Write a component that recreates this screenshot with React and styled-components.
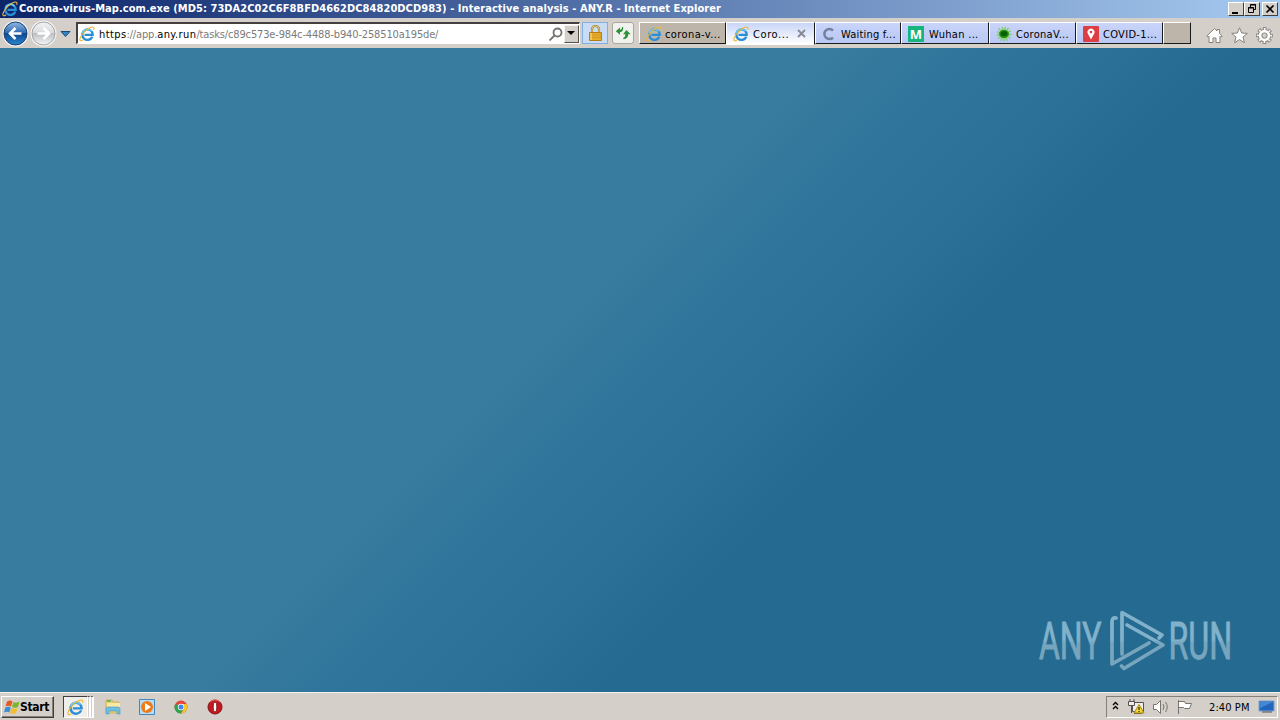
import React from "react";
import styled, { createGlobalStyle } from "styled-components";

const GlobalStyle = createGlobalStyle`
  * {
    box-sizing: border-box;
  }

  body {
    margin: 0;
    overflow: hidden;
    font-family: "DejaVu Sans Condensed", "DejaVu Sans", sans-serif;
    font-size: 11px;
    color: #000;
  }

  svg {
    flex: none;
  }
`;

const Screen = styled.div`
  width: 1280px;
  height: 720px;
  display: flex;
  flex-direction: column;
  background: #d4cfc8;
`;

const TitleBar = styled.header`
  height: 18px;
  flex: none;
  display: flex;
  align-items: center;
  padding: 0 2px;
  background: linear-gradient(90deg, #0b246a 0%, #a6caf0 100%);
`;

const Title = styled.h1`
  flex: 1;
  margin: 0 0 0 1px;
  color: #fff;
  font-size: 11px;
  line-height: 18px;
  font-weight: 700;
  letter-spacing: 0.06px;
  white-space: pre;
`;

const WindowButton = styled.button`
  width: 16px;
  height: 14px;
  padding: 0;
  margin-left: ${(props) => props.$gap || 0}px;
  display: flex;
  border: 1px solid;
  border-color: #fff #404040 #404040 #fff;
  background: #d4cfc8;
`;

const Toolbar = styled.nav`
  height: 30px;
  flex: none;
  display: flex;
  align-items: flex-start;
  padding: 4px 7px 0 2px;
  background: #d4cfc8;
`;

const NavButtons = styled.div`
  display: flex;
  align-items: center;
  width: 74px;
  height: 24px;
`;

const AddressBar = styled.div`
  width: 504px;
  height: 22px;
  display: flex;
  align-items: center;
  padding-left: 1px;
  border: 1px solid #fff;
  border-top: 2px solid #45403f;
  border-left: 2px solid #45403f;
  background: #fff;
`;

const Url = styled.div`
  flex: 1;
  margin-left: 4px;
  padding-top: 1px;
  color: #7b7b7b;
  letter-spacing: -0.15px;
  white-space: nowrap;

  b {
    color: #000;
    font-weight: 400;
    letter-spacing: 0.4px;
  }
`;

const DropButton = styled.button`
  width: 15px;
  height: 18px;
  margin-left: 1px;
  padding: 0;
  display: flex;
  align-items: center;
  justify-content: center;
  border: 1px solid;
  border-color: #f4f2ee #55504c #55504c #f4f2ee;
  background: #d4cfc8;
`;

const ToolButton = styled.button`
  width: ${(props) => props.$width}px;
  height: 22px;
  margin-left: ${(props) => props.$gap}px;
  padding: 0;
  display: flex;
  align-items: center;
  justify-content: center;
  border: 1px solid ${(props) => props.$border};
  border-radius: ${(props) => props.$radius || 0}px;
  background: ${(props) => props.$fill};
`;

const Tabs = styled.div`
  height: 23px;
  margin-left: 5px;
  display: flex;
`;

const Tab = styled.div`
  width: ${(props) => props.$width || 87}px;
  height: ${(props) => (props.$active ? 23 : 22)}px;
  display: flex;
  align-items: center;
  padding: 1px ${(props) => (props.$active ? 7 : 0)}px 0 6px;
  border: 1px solid;
  border-color: ${(props) =>
    props.$active ? "#fff #1a1a1a #fff #fff" : "#fff #1a1a1a #1a1a1a #fff"};
  background: ${(props) => props.$fill};
`;

const TabLabel = styled.span`
  flex: 1;
  margin-left: ${(props) => props.$gap}px;
  padding-top: ${(props) => props.$top ?? 1}px;
  letter-spacing: ${(props) => props.$spacing || 0}px;
  white-space: nowrap;
`;

const Commands = styled.div`
  height: 24px;
  margin-left: auto;
  padding-top: 2px;
  display: flex;
  align-items: center;
  gap: 8px;
`;

const Page = styled.main`
  flex: 1;
  display: flex;
  align-items: flex-end;
  justify-content: flex-end;
  padding: 0 36px 18px 0;
  background: linear-gradient(135deg, #387c9f 0%, #387c9f 43.5%, #30759b 50%, #2d7299 56%, #256a90 65%, #256a90 100%);
`;

const Taskbar = styled.footer`
  height: 28px;
  flex: none;
  display: flex;
  align-items: center;
  padding: 1px 2px 0 1px;
  border-top: 1px solid #f5f3f0;
  background: #d4cfc8;
`;

const StartButton = styled.button`
  width: 53px;
  height: 22px;
  padding: 0 0 0 2px;
  display: flex;
  align-items: center;
  border: 1px solid;
  border-color: #fff #404040 #404040 #fff;
  box-shadow: inset -1px -1px #85807a;
  background: #d4cfc8;
  color: #000;
  font: 700 12px "DejaVu Sans Condensed", sans-serif;
  letter-spacing: -0.3px;
`;

const RunningTask = styled.div`
  width: 25px;
  height: 22px;
  margin-left: 9px;
  display: flex;
  align-items: center;
  justify-content: center;
  border: 1px solid;
  border-color: #404040 #fff #fff #404040;
  background: #f0eeeb;
`;

const StackEdge = styled.div`
  width: 3px;
  height: 22px;
  border: solid #fff;
  border-width: 0 2px 1px 0;
  border-top: 1px solid #55504c;
`;

const QuickLaunch = styled.div`
  margin-left: 9px;
  display: flex;
  gap: 14px;
`;

const Tray = styled.div`
  width: 172px;
  height: 22px;
  margin-left: auto;
  display: flex;
  align-items: center;
  padding-left: 3px;
  border: 1px solid;
  border-color: #85807a #fff #fff #85807a;
`;

const Clock = styled.span`
  width: 49px;
  margin-left: 16px;
  letter-spacing: 0.1px;
  white-space: nowrap;
`;

function IeIcon({ size = 16 }) {
  return (
    <svg width={size} height={size} viewBox="0 0 16 16" fill="none">
      <path d="M13.300 10.700A5.200 5.200 0 1 1 13.700 8.800H5.500" stroke="#2a8ed6" strokeWidth="2.300" />
      <path d="M3.400 6.700a5.400 5.400 0 0 1 9.200-1.400" stroke="#6cc8f3" strokeWidth="1.400" />
      <path
        d="M4 14C1.500 15.600.2 14.800 1.200 12 3 7 9 1.600 13 1c1.900-.2 2.300 1 1.700 2.800"
        stroke="#edb936"
        strokeWidth="1.100"
      />
    </svg>
  );
}

function ArrowButton({ forward }) {
  return (
    <svg width="28" height="28" viewBox="0 0 28 28">
      <defs>
        <linearGradient id="blue" x2="0" y2="1">
          <stop stopColor="#92b9e3" />
          <stop offset=".48" stopColor="#2d68b2" />
          <stop offset=".5" stopColor="#10488f" />
          <stop offset="1" stopColor="#2787d1" />
        </linearGradient>
        <linearGradient id="silver" x2="0" y2="1">
          <stop stopColor="#f4f4f4" />
          <stop offset=".48" stopColor="#d8dadc" />
          <stop offset=".5" stopColor="#bbbec1" />
          <stop offset="1" stopColor="#f7f7f7" />
        </linearGradient>
      </defs>
      <circle cx="13.500" cy="13.500" r="13" fill="#f5f5f4" />
      <circle
        cx="13.500"
        cy="13.500"
        r="11.500"
        fill={forward ? "url(#silver)" : "url(#blue)"}
        stroke={forward ? "#a1a3a6" : "#183d71"}
      />
      <path
        d="M19.500 13.500H9M13.500 8 8 13.500l5.500 5.500"
        transform={forward ? "rotate(180 13.500 13.500)" : undefined}
        fill="none"
        stroke="#fff"
        strokeWidth="2.600"
      />
    </svg>
  );
}

function LockIcon() {
  return (
    <svg width="15" height="17" viewBox="0 0 15 17">
      <path d="M4 8V4.500a3.500 3.500 0 0 1 7 0V8" fill="none" stroke="#a7822d" strokeWidth="2.200" />
      <path d="M4 8V4.500a3.500 3.500 0 0 1 7 0V8" fill="none" stroke="#f0dc98" strokeWidth=".8" />
      <path d="M1.500 7.500h12v8h-12z" fill="#e9ad25" stroke="#b67c15" />
      <path d="M2 10h11M2 12.500h11" stroke="#d0982a" />
      <path d="M3 8v7" stroke="#ffe28a" />
    </svg>
  );
}

function RefreshIcon() {
  return (
    <svg width="16" height="16" viewBox="0 0 16 16" fill="#2c9138">
      <path d="M.8 6.200 5 2.400V4.800Q7 4.800 7 2h1.200q.3 5-3.200 5.300V9.800z" />
      <path d="M11.500 5 15.600 9.300H13.200q.1 4.700-4.800 5V12.600q2.100-.4 2-3.300H8z" />
    </svg>
  );
}

function VirusIcon() {
  return (
    <svg width="16" height="16" viewBox="0 0 16 16">
      <circle cx="8" cy="8" r="5.500" fill="#9fda87" />
      <circle cx="8" cy="8" r="6" fill="none" stroke="#83cb72" strokeWidth="3" strokeDasharray="1.200 1.600" />
      <ellipse cx="8" cy="8" rx="5" ry="4.200" fill="#2a961c" />
      <ellipse cx="8" cy="7.800" rx="3.500" ry="2.700" fill="#086204" />
    </svg>
  );
}

function PinIcon() {
  return (
    <svg width="16" height="16" viewBox="0 0 16 16">
      <rect width="16" height="16" rx="1" fill="#dc3e43" />
      <path d="M8 13.500 5 8a3.500 3.500 0 1 1 6 0z" fill="#fff" />
      <circle cx="8" cy="6" r="1.300" fill="#dc3e43" />
    </svg>
  );
}

const MediumBadge = styled.span`
  width: 16px;
  height: 16px;
  display: flex;
  align-items: center;
  justify-content: center;
  background: #17b57b;
  color: #fff;
  font: 700 13px "Open Sans", sans-serif;
`;

function HomeIcon() {
  return (
    <svg width="17" height="17" viewBox="0 0 17 17">
      <path
        d="M.8 9 8.500 1.500l2.500 2.500V2.500h2.500V6.500L16.200 9 15 10.200l-1-1v6.300h-4v-4.500H7v4.500H3V9.200l-1 1z"
        fill="#fff"
        stroke="#85827d"
      />
    </svg>
  );
}

function StarIcon() {
  return (
    <svg width="17" height="17" viewBox="0 0 17 17">
      <path
        d="m8.500.8 2.200 5.200 5.600.4-4.300 3.600 1.400 5.700-4.900-3.100-4.900 3.100L5 10 .7 6.400l5.600-.4z"
        fill="#fff"
        stroke="#85827d"
      />
    </svg>
  );
}

function GearIcon() {
  return (
    <svg width="17" height="17" viewBox="0 0 17 17" fill="none">
      <circle cx="8.500" cy="8.500" r="6.600" stroke="#85827d" strokeWidth="3.600" strokeDasharray="3.400 1.784" strokeDashoffset="1.700" />
      <circle cx="8.500" cy="8.500" r="4.400" stroke="#85827d" strokeWidth="4.400" />
      <circle cx="8.500" cy="8.500" r="6.600" stroke="#fff" strokeWidth="2" strokeDasharray="1.700 3.484" strokeDashoffset=".85" />
      <circle cx="8.500" cy="8.500" r="4.400" stroke="#fff" strokeWidth="2.600" />
    </svg>
  );
}

function WindowsIcon() {
  return (
    <svg width="16" height="16" viewBox="0 0 16 16">
      <path d="M3 2.500Q6 .500 8.500 2.500L7 7.500Q4.500 6 1.500 7.500z" fill="#e85a25" />
      <path d="M9.500 3q3 1.500 6-.5L14 8q-3 1.500-6 0z" fill="#79b62e" />
      <path d="M1.300 8.500q3-1.500 5.500 0L5.300 13.500q-3-1.500-5.300 0z" fill="#398ed5" />
      <path d="M7.500 9q3 1.500 6 0L12 14q-3 1.500-6 0z" fill="#f4bd2d" />
    </svg>
  );
}

function FolderIcon() {
  return (
    <svg width="20" height="20" viewBox="0 0 20 20">
      <path d="M3 3h6l1 2h6v11H3z" fill="#ecd16d" stroke="#c7a94d" strokeWidth=".7" />
      <path d="M4 6h13v7H4z" fill="#f8eaa6" />
      <path d="M4 4h4" stroke="#56ad5b" strokeWidth="1.500" />
      <path d="M3 17v-5q0-2 2-2h10q2 0 2 2v5h-3v-3H6v3z" fill="#6fbfe2" stroke="#4b99bd" strokeWidth=".6" />
    </svg>
  );
}

function MediaIcon() {
  return (
    <svg width="20" height="20" viewBox="0 0 20 20">
      <path d="M2.500 2.500h15v15h-15z" fill="#b7dcf5" stroke="#4387bd" />
      <circle cx="10" cy="10" r="6" fill="#ee7b16" />
      <path d="m8 6 6 4-6 4z" fill="#fff" />
    </svg>
  );
}

function ChromeIcon() {
  return (
    <svg width="20" height="20" viewBox="0 0 20 20">
      <circle cx="10" cy="10" r="6.500" fill="#e5453a" />
      <path d="M4.400 6.700A6.500 6.500 0 0 0 10 16.500l3-5-3-1.500z" fill="#30a350" />
      <path d="M15.600 7A6.500 6.500 0 0 1 10 16.500l3-5L10 7z" fill="#f6c52b" />
      <circle cx="10" cy="10" r="3.200" fill="#fff" />
      <circle cx="10" cy="10" r="2.500" fill="#4285e8" />
    </svg>
  );
}

function OperaIcon() {
  return (
    <svg width="20" height="20" viewBox="0 0 20 20">
      <circle cx="10" cy="10" r="7" fill="#c31820" stroke="#861016" />
      <path d="M5 5q5-4 10 0" stroke="#f06a68" fill="none" />
      <ellipse cx="10" cy="10" rx="1.800" ry="5" fill="#fff" stroke="#7d1010" strokeWidth=".8" />
    </svg>
  );
}

function Watermark() {
  return (
    <svg width="210" height="68" viewBox="0 0 210 68" opacity=".92">
      <defs>
        <linearGradient id="mark" gradientUnits="userSpaceOnUse" x1="0" y1="0" x2="0" y2="68">
          <stop offset=".5" stopColor="#8ab9d0" />
          <stop offset=".54" stopColor="#7eabc2" />
        </linearGradient>
      </defs>
      <g
        fill="url(#mark)"
        stroke="url(#mark)"
        strokeWidth=".9"
        fontFamily="Roboto, sans-serif"
        fontSize="51.500"
      >
        <text transform="translate(5 0) scale(.62 1)" y="53">ANY</text>
        <text transform="translate(134.500 0) scale(.625 1)" y="53">RUN</text>
      </g>
      <g fill="none" stroke="url(#mark)" strokeWidth="3.700" strokeLinejoin="round" strokeLinecap="round">
        <path d="M82 12q-4-1-4 4v42l37-21" />
        <path d="M88 48V6.500l40 22.500-3 3" />
        <path d="M93 19l36 20L90 62.500 87.500 60" />
      </g>
    </svg>
  );
}

const blueTab = "linear-gradient(#c9d4f8, #b8c8f5)";

function App() {
  return (
    <Screen>
      <GlobalStyle />
      <TitleBar>
        <IeIcon />
        <Title>
          Corona-virus-Map.com.exe (MD5: 73DA2C02C6F8BFD4662DC84820DCD983) - Interactive analysis - ANY.R - Internet Explorer
        </Title>
        <WindowButton aria-label="Minimize">
          <svg width="14" height="12"><path d="M3 9h6v2H3z" /></svg>
        </WindowButton>
        <WindowButton aria-label="Restore">
          <svg width="14" height="12" fill="none" stroke="#000">
            <path d="M5.500 4V1.500h5v5H9M5 2h6M3.500 4.500h5v5h-5zM3 5h6" />
          </svg>
        </WindowButton>
        <WindowButton $gap={2} aria-label="Close">
          <svg width="14" height="12" stroke="#000" strokeWidth="1.700"><path d="m3.500 2.500 7 7m0-7-7 7" /></svg>
        </WindowButton>
      </TitleBar>

      <Toolbar>
        <NavButtons>
          <ArrowButton />
          <ArrowButton forward />
          <svg width="18" height="12"><path d="M3 3.500h9L7.500 8.500z" fill="#3585c4" stroke="#174c79" /></svg>
        </NavButtons>
        <AddressBar>
          <IeIcon />
          <Url>
            <b>https</b>://app.<b>any.run</b>/tasks/c89c573e-984c-4488-b940-258510a195de/
          </Url>
          <svg width="14" height="14" fill="none" stroke="#77736f" strokeWidth="1.800">
            <circle cx="8.500" cy="5.500" r="4" /><path d="m5.500 8.500-5 5" />
          </svg>
          <DropButton aria-label="Show address list">
            <svg width="9" height="5"><path d="M0 0h8L4 4z" /></svg>
          </DropButton>
        </AddressBar>
        <ToolButton $width={26} $gap={2} $border="#83afe2" $fill="#c8dcf6"><LockIcon /></ToolButton>
        <ToolButton $width={22} $gap={4} $border="#aaa6a0" $fill="#f1f1ed" $radius={3}><RefreshIcon /></ToolButton>
        <Tabs>
          <Tab $width={87} $fill="#bdb5aa"><IeIcon /><TabLabel $gap={3} $spacing={0.4}>corona-v...</TabLabel></Tab>
          <Tab $width={89} $active $fill="linear-gradient(#c7d5f7, #fff)">
            <IeIcon /><TabLabel $gap={4} $top={0} $spacing={0.6}>Coro...</TabLabel>
            <svg width="10" height="10" stroke="#858991" strokeWidth="1.800"><path d="m1 1 7 7m0-7L1 8" /></svg>
          </Tab>
          <Tab $width={86} $fill={blueTab}>
            <svg width="16" height="16" fill="none" stroke="#71819e" strokeWidth="2.500"><path d="M11 4.500a5 5 0 1 0 0 7" /></svg>
            <TabLabel $gap={3} $spacing={0.2}>Waiting f...</TabLabel>
          </Tab>
          <Tab $width={88} $fill={blueTab}><MediumBadge>M</MediumBadge><TabLabel $gap={5} $spacing={0.3}>Wuhan ...</TabLabel></Tab>
          <Tab $fill={blueTab}><VirusIcon /><TabLabel $gap={4} $spacing={0.3}>CoronaV...</TabLabel></Tab>
          <Tab $fill={blueTab}><PinIcon /><TabLabel $gap={4} $spacing={0.3}>COVID-1...</TabLabel></Tab>
          <Tab $width={28} $fill="#bdb5aa" />
        </Tabs>
        <Commands><HomeIcon /><StarIcon /><GearIcon /></Commands>
      </Toolbar>

      <Page><Watermark /></Page>

      <Taskbar>
        <StartButton><WindowsIcon />Start</StartButton>
        <RunningTask><IeIcon size={17} /></RunningTask>
        <StackEdge /><StackEdge />
        <QuickLaunch><FolderIcon /><MediaIcon /><ChromeIcon /><OperaIcon /></QuickLaunch>
        <Tray>
          <svg width="10" height="14" fill="none" stroke="#000" strokeWidth="1.300"><path d="m3 5 2.500-2.500L8 5M3 9l2.500-2.500L8 9" /></svg>
          <svg width="29" height="18" fill="#eee" stroke="#55524f">
            <path d="M12.500 4.500h11v9h-11zM14 15.500h8" /><path d="M10 1v3M14 1v3M8.500 3.500h6v4h-6zM11.500 8v7" />
            <path d="m19 6.500 5 8.500H14z" fill="#f7d52d" stroke="#a98a14" /><path d="M19 9v3M19 13v1" stroke="#000" />
          </svg>
          <svg width="22" height="18" fill="#fff" stroke="#77736f">
            <path d="M4.500 6.500h3l4-4v13l-4-4h-3z" /><path d="M14 6q2 3 0 6M16.500 4q3.500 5 0 10" fill="none" />
          </svg>
          <svg width="22" height="18" fill="#fff" stroke="#77736f"><path d="M7.500 2v14M7.500 3.500h6l1 2h6l-2 5h-5l-1-1h-5z" /></svg>
          <Clock>2:40 PM</Clock>
          <svg width="17" height="16">
            <path d="M1 2h15v10H1z" fill="#2265bd" stroke="#7ba2ce" /><path d="M2 3h13L2 9z" fill="#4487d3" /><path d="M4 13h10" stroke="#555" />
          </svg>
        </Tray>
      </Taskbar>
    </Screen>
  );
}

export default App;
